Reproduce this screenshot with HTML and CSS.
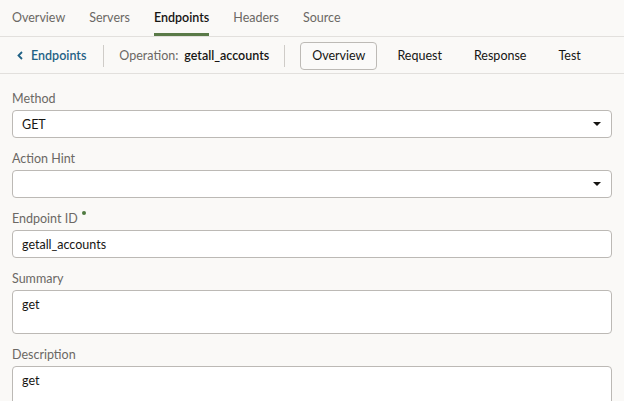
FILE: index.html
```html
<!DOCTYPE html>
<html>
<head>
<meta charset="utf-8">
<link rel="stylesheet" href="styles.css">
</head>
<body>
<nav class="tabs">
  <span class="tab">Overview</span>
  <span class="tab">Servers</span>
  <span class="tab active">Endpoints</span>
  <span class="tab">Headers</span>
  <span class="tab">Source</span>
</nav>
<div class="bar">
  <a class="back">
    <svg class="chev" width="6" height="9" viewBox="0 0 6 9"><path d="M5 1 L1.5 4.5 L5 8" fill="none" stroke="currentColor" stroke-width="1.8"/></svg>
    Endpoints
  </a>
  <span class="sep sep-first"></span>
  <span class="op"><span class="op-label">Operation:</span><span class="op-name">getall_accounts</span></span>
  <span class="sep"></span>
  <div class="subtabs">
    <span class="subtab selected">Overview</span>
    <span class="subtab">Request</span>
    <span class="subtab">Response</span>
    <span class="subtab">Test</span>
  </div>
</div>
<form class="form">
  <div class="field">
    <label class="label">Method</label>
    <div class="input select">GET<span class="caret"></span></div>
  </div>
  <div class="field">
    <label class="label">Action Hint</label>
    <div class="input select"><span class="caret"></span></div>
  </div>
  <div class="field">
    <label class="label">Endpoint ID<span class="req"></span></label>
    <div class="input">getall_accounts</div>
  </div>
  <div class="field">
    <label class="label">Summary</label>
    <div class="input area">get</div>
  </div>
  <div class="field">
    <label class="label">Description</label>
    <div class="input area">get</div>
  </div>
</form>
</body>
</html>
```
FILE: styles.css
```css
* { box-sizing: border-box; }
html, body { margin: 0; padding: 0; }
body {
  background: #faf9f7;
  font-family: Lato, "Segoe UI", sans-serif;
  font-size: 12.5px;
  color: #161513;
  width: 624px;
  height: 401px;
  overflow: hidden;
}
.tabs {
  display: flex;
  gap: 24px;
  padding: 0 12px;
  height: 37px;
  border-bottom: 1px solid #e2e0dd;
}
.tab {
  display: flex;
  align-items: center;
  height: 36px;
  padding-top: 2px;
  color: #6b6864;
  border-bottom: 3px solid transparent;
}
.tab.active {
  color: #161513;
  font-weight: 600;
  border-bottom-color: #5a7a48;
}
.bar {
  display: flex;
  align-items: center;
  height: 37px;
  border-bottom: 1px solid #e2e0dd;
  padding-left: 17px;
  padding-top: 1px;
}
.back {
  display: flex;
  align-items: center;
  gap: 8px;
  color: #1f6185;
  font-weight: 600;
}
.chev { display: block; }
.sep {
  width: 1px;
  height: 22px;
  background: #cfccc8;
  margin: 0 15px;
}
.sep-first { margin-left: 17px; }
.op-label { color: #6b6864; margin-right: 6px; }
.op-name { font-weight: 600; }
.subtabs {
  display: flex;
}
.subtab {
  height: 28px;
  padding: 0 15px;
  display: flex;
  align-items: center;
  border: 1px solid transparent;
  border-radius: 4px;
}
.subtab.selected {
  padding: 0 11px;
  margin-right: 4px;
  border-color: #bdbab6;
  background: #fbfaf9;
}
.form {
  padding: 16px 12px 0;
}
.field { margin-bottom: 12px; }
.label {
  display: block;
  line-height: 16px;
  padding-top: 1px;
  margin-bottom: 3px;
  color: #6b6864;
}
.req {
  display: inline-block;
  width: 4px;
  height: 4px;
  border-radius: 50%;
  background: #4f7a40;
  vertical-align: top;
  margin-left: 4px;
  margin-top: 0;
}
.input {
  position: relative;
  height: 28px;
  background: #fff;
  border: 1px solid #bcb9b5;
  border-radius: 4px;
  padding: 0 9px;
  display: flex;
  align-items: center;
  color: #161513;
}
.input.area {
  height: 44px;
  align-items: flex-start;
  padding-top: 6px;
}
.caret {
  position: absolute;
  right: 10px;
  top: 11px;
  width: 0;
  height: 0;
  border-left: 4px solid transparent;
  border-right: 4px solid transparent;
  border-top: 4px solid #161513;
}
```
